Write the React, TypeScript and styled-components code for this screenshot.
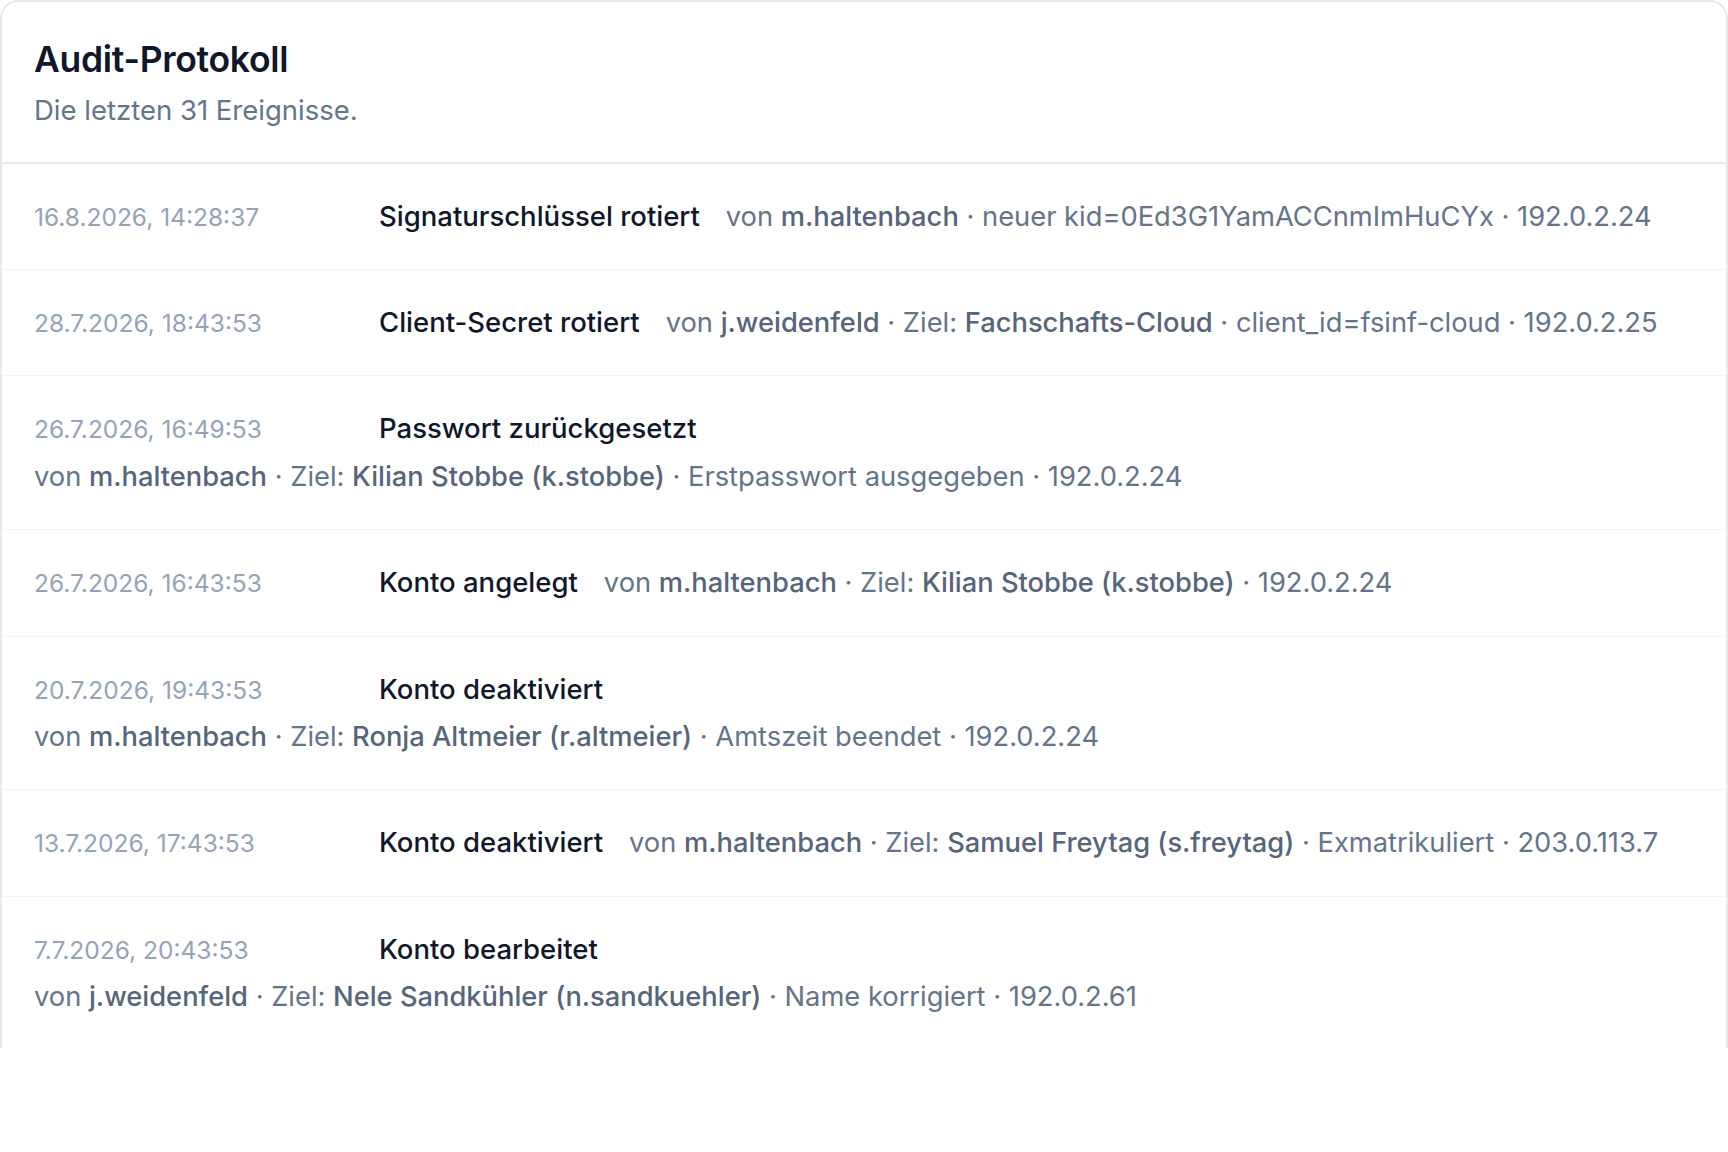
import React from "react";
import styled, { createGlobalStyle } from "styled-components";

type Part = { text: string; strong?: boolean };

type Entry = {
  time: string;
  action: string;
  actor: string;
  target?: Part[];
  extra?: string[];
  ip: string;
  stacked?: boolean;
};

const entries: Entry[] = [
  {
    time: "16.8.2026, 14:28:37",
    action: "Signaturschlüssel rotiert",
    actor: "m.haltenbach",
    extra: ["neuer kid=0Ed3G1YamACCnmImHuCYx"],
    ip: "192.0.2.24",
  },
  {
    time: "28.7.2026, 18:43:53",
    action: "Client-Secret rotiert",
    actor: "j.weidenfeld",
    target: [{ text: "Fachschafts-Cloud", strong: true }],
    extra: ["client_id=fsinf-cloud"],
    ip: "192.0.2.25",
  },
  {
    time: "26.7.2026, 16:49:53",
    action: "Passwort zurückgesetzt",
    actor: "m.haltenbach",
    target: [{ text: "Kilian Stobbe (k.stobbe)", strong: true }],
    extra: ["Erstpasswort ausgegeben"],
    ip: "192.0.2.24",
    stacked: true,
  },
  {
    time: "26.7.2026, 16:43:53",
    action: "Konto angelegt",
    actor: "m.haltenbach",
    target: [{ text: "Kilian Stobbe (k.stobbe)", strong: true }],
    ip: "192.0.2.24",
  },
  {
    time: "20.7.2026, 19:43:53",
    action: "Konto deaktiviert",
    actor: "m.haltenbach",
    target: [{ text: "Ronja Altmeier (r.altmeier)", strong: true }],
    extra: ["Amtszeit beendet"],
    ip: "192.0.2.24",
    stacked: true,
  },
  {
    time: "13.7.2026, 17:43:53",
    action: "Konto deaktiviert",
    actor: "m.haltenbach",
    target: [{ text: "Samuel Freytag (s.freytag)", strong: true }],
    extra: ["Exmatrikuliert"],
    ip: "203.0.113.7",
  },
  {
    time: "7.7.2026, 20:43:53",
    action: "Konto bearbeitet",
    actor: "j.weidenfeld",
    target: [{ text: "Nele Sandkühler (n.sandkuehler)", strong: true }],
    extra: ["Name korrigiert"],
    ip: "192.0.2.61",
    stacked: true,
  },
];

const App = () => {
  return (
    <>
      <GlobalStyle />
      <Card>
        <Header>
          <Title>Audit-Protokoll</Title>
          <Subtitle>Die letzten 31 Ereignisse.</Subtitle>
        </Header>
        <List>
          {entries.map((e, i) => (
            <Row key={i}>
              <Time>{e.time}</Time>
              <Action>{e.action}</Action>
              <Details $stacked={e.stacked}>
                von <Strong>{e.actor}</Strong>
                {e.target && (
                  <>
                    {" · Ziel: "}
                    {e.target.map((p, j) =>
                      p.strong ? <Strong key={j}>{p.text}</Strong> : <span key={j}>{p.text}</span>
                    )}
                  </>
                )}
                {e.extra?.map((x, j) => (
                  <span key={j}>{" · " + x}</span>
                ))}
                {" · " + e.ip}
              </Details>
            </Row>
          ))}
        </List>
      </Card>
    </>
  );
};

export default App;

const GlobalStyle = createGlobalStyle`
  html, body {
    margin: 0;
    padding: 0;
    background: #fff;
  }
  body {
    font-family: Inter, "Noto Sans", "Liberation Sans", sans-serif;
    -webkit-font-smoothing: antialiased;
  }
`;

const Card = styled.div`
  height: 1048px;
  overflow: hidden;
  box-sizing: border-box;
  border: 2px solid #e5e9f0;
  border-bottom: none;
  border-radius: 18px 18px 0 0;
  background: #fff;
`;

const Header = styled.div`
  padding: 34px 32px 32px;
  border-bottom: 2px solid #e5e9f0;
`;

const Title = styled.h1`
  margin: 0;
  font-size: 35.5px;
  line-height: 48px;
  font-weight: 600;
  color: #0f172a;
  letter-spacing: -0.3px;
`;

const Subtitle = styled.p`
  margin: 6px 0 0;
  font-size: 27.5px;
  line-height: 40px;
  color: #64748b;
`;

const List = styled.ul`
  list-style: none;
  margin: 0;
  padding: 0;
`;

const Row = styled.li`
  display: flex;
  flex-wrap: wrap;
  align-items: baseline;
  column-gap: 26px;
  row-gap: 7.5px;
  padding: 32px 32px;
  border-bottom: 1px solid #f1f4f8;

  &:last-child {
    border-bottom: none;
  }
`;

const Time = styled.span`
  width: 319px;
  flex-shrink: 0;
  font-size: 24.5px;
  line-height: 40.2px;
  color: #94a3b8;
`;

const Action = styled.span`
  font-size: 27.5px;
  line-height: 40.2px;
  font-weight: 500;
  color: #0f172a;
`;

const Details = styled.span<{ $stacked?: boolean }>`
  font-size: 27.3px;
  line-height: 40.2px;
  color: #64748b;
  white-space: pre-wrap;
  ${(p) => (p.$stacked ? "flex-basis: 100%;" : "")}
`;

const Strong = styled.span`
  font-weight: 500;
  color: #56657a;
`;
